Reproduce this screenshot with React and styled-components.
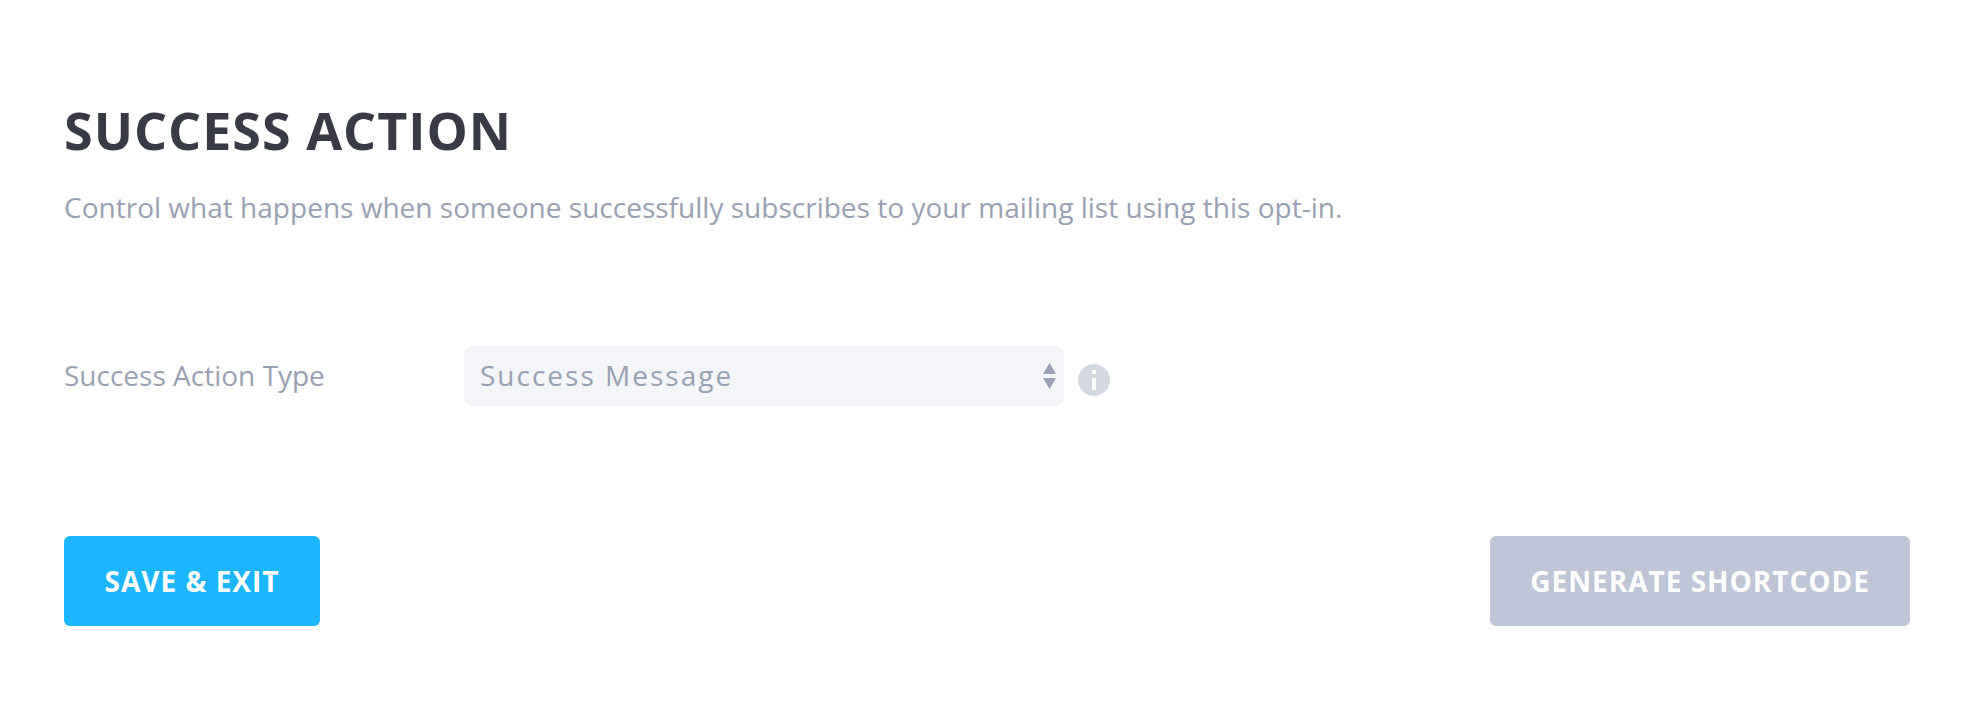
import { useState } from "react";
import styled, { createGlobalStyle } from "styled-components";

const App = () => {
  const [action, setAction] = useState("message");

  // select value change
  const change = (e) => {
    setAction(e.target.value);
  };

  return (
    <>
      <GlobalStyle />
      <Panel>
        <Title>SUCCESS ACTION</Title>
        <Description>
          Control what happens when someone successfully subscribes to your
          mailing list using this opt-in.
        </Description>

        <OptionRow>
          <OptionLabel htmlFor="action">Success Action Type</OptionLabel>
          <SelectBox>
            <Select id="action" value={action} onChange={change}>
              <option value="message">Success Message</option>
              <option value="redirect">Redirect</option>
            </Select>
            <Arrows viewBox="0 0 13 26">
              <path d="M6.5 0L13 11H0Z" />
              <path d="M0 15H13L6.5 26Z" />
            </Arrows>
          </SelectBox>
          <InfoIcon viewBox="0 0 32 32">
            <circle cx="16" cy="16" r="16" fill="#d3d8e1" />
            <path d="M14 6h4v4h-4zM14 14h4v12h-4z" fill="#ffffff" />
          </InfoIcon>
        </OptionRow>

        <ButtonRow>
          <Button $color="#1bb6ff">SAVE &amp; EXIT</Button>
          <Button $color="#bec5d7">GENERATE SHORTCODE</Button>
        </ButtonRow>
      </Panel>
    </>
  );
};

// styled-components
const GlobalStyle = createGlobalStyle`
  * {
    box-sizing: border-box;
  }
  body {
    margin: 0;
    background-color: #ffffff;
    font-family: "Open Sans", sans-serif;
    font-size: 28px;
    color: #98a1b2;
  }
`;

const Panel = styled.div`
  height: 714px;
  padding: 94px 62px 0 64px;
`;
const Title = styled.h1`
  margin: 0;
  font-size: 52px;
  font-weight: 700;
  line-height: 72px;
  letter-spacing: 1px;
  color: #383a46;
`;
const Description = styled.p`
  margin: 21px 0 0;
  line-height: 40px;
  letter-spacing: 0.013px;
`;

const OptionRow = styled.div`
  margin-top: 119px;
  height: 60px;
  display: flex;
  align-items: center;
`;
const OptionLabel = styled.label`
  width: 400px;
  padding-bottom: 2px;
`;
const SelectBox = styled.div`
  position: relative;
  width: 600px;
  height: 60px;
`;
const Select = styled.select`
  width: 100%;
  height: 100%;
  padding: 0 40px 2px 16px;
  border: none;
  border-radius: 9px;
  appearance: none;
  background-color: #f3f5f9;
  font-family: inherit;
  font-size: 28px;
  letter-spacing: 2px;
  color: #98a1b2;
`;
const Arrows = styled.svg`
  position: absolute;
  top: 17px;
  right: 8px;
  width: 13px;
  height: 26px;
  fill: #98a1b2;
  pointer-events: none;
`;
const InfoIcon = styled.svg`
  margin: 8px 0 0 14px;
  width: 32px;
  height: 32px;
`;

const ButtonRow = styled.div`
  margin-top: 130px;
  display: flex;
  justify-content: space-between;
`;
const Button = styled.button`
  min-width: 256px;
  height: 90px;
  padding: 0 40px;
  border: none;
  border-radius: 6px;
  background-color: ${(props) => props.$color};
  font-family: inherit;
  font-size: 28px;
  font-weight: 700;
  letter-spacing: 1px;
  color: #ffffff;
`;

export default App;
